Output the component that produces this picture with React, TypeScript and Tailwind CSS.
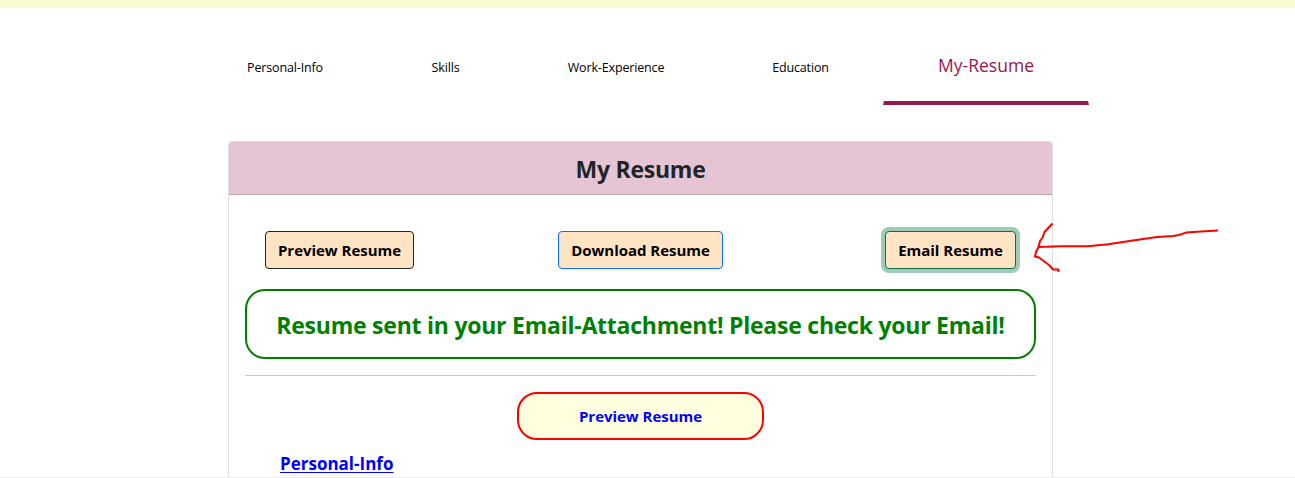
const tabs = [
  { label: 'Personal-Info', width: 'w-[184px]' },
  { label: 'Skills', width: 'w-[137px]' },
  { label: 'Work-Experience', width: 'w-[204px]' },
  { label: 'Education', width: 'w-[165px]' },
];

const actions = [
  { label: 'Preview Resume', style: 'w-[149px] border-[#212529]' },
  { label: 'Download Resume', style: 'ml-[144px] mr-[162px] w-[165px] border-[#0d6efd]' },
  { label: 'Email Resume', style: 'w-[131px] border-[#146c43] shadow-[0_0_0_4px_#9dccb7]' },
];

function Arrow() {
  return (
    <svg className="pointer-events-none absolute left-[1030px] top-[218px]" width="195" height="60" viewBox="1030 218 195 60" fill="none" stroke="#ff0000" strokeWidth="2" strokeLinejoin="round">
      <path d="M1218 230.5L1201 231.6L1186 232.6L1179 235L1173 236L1157 237L1138 239.700L1108 244.300L1088 246.300L1060 246.300L1038.500 247" />
      <path d="M1052.500 223.500L1044.500 232L1042.500 237.500L1040 241L1038.500 247L1036 252L1035 256.500L1039 257.500L1049 265L1053 269.500L1058.500 269.500V272" />
    </svg>
  );
}

export default function App() {
  return (
    <div className="relative h-[478px] w-full overflow-hidden border-b border-[#eeeeee] bg-white font-['Open_Sans','Noto_Sans',sans-serif]">
      <div className="h-2 bg-[#f9fad2]" />
      <nav className="ml-[193px] flex h-[97px] items-stretch">
        {tabs.map((tab) => (
          <a key={tab.label} className={`flex shrink-0 justify-center pt-[51px] text-[12.5px] leading-[18px] tracking-[-0.15px] text-black ${tab.width}`}>
            {tab.label}
          </a>
        ))}
        <a className="flex w-[206px] shrink-0 justify-center border-x border-b-4 border-x-transparent border-b-[#99154e] pt-[44px] text-[17.5px] font-medium leading-[27px] tracking-[0.02px] text-[#99154e]">
          My-Resume
        </a>
      </nav>

      <main className="ml-[228px] mt-[36px] h-[400px] w-[825px] rounded-[4px] border border-[#dfdfdf] bg-white">
        <h1 className="flex h-[53px] items-center justify-center rounded-t-[3px] border-b border-[#c5a9b7] bg-[#e5c5d4] pt-[2px] text-[23px] font-bold leading-[29px] tracking-[-0.25px] text-[#212529]">
          My Resume
        </h1>
        <div className="px-4">
          <div className="flex px-5 pt-[36px]">
            {actions.map((action) => (
              <button key={action.label} className={`h-[38px] shrink-0 rounded-[4px] border bg-[#ffe4c4] pb-[1px] text-[15px] font-bold leading-6 tracking-[-0.03px] text-black ${action.style}`}>
                {action.label}
              </button>
            ))}
          </div>
          <div className="mt-5 flex h-[70px] items-center justify-center whitespace-nowrap rounded-[20px] border-2 border-[#008000] pt-[3px] text-[23px] font-bold leading-[29px] tracking-[-0.24px] text-[#008000]">
            Resume sent in your Email-Attachment! Please check your Email!
          </div>
          <hr className="mt-4 border-t border-[#c8c9ca]" />
          <div className="mx-auto mt-4 flex h-12 w-[247px] items-center justify-center rounded-[20px] border-2 border-[#ff0000] bg-[#ffffe0] pb-[1px] text-[15px] font-bold leading-6 tracking-[-0.03px] text-[#0000ff]">
            Preview Resume
          </div>
          <h2 className="ml-[35px] mt-[12px] text-[17px] font-bold leading-[24px] text-[#0000ff] underline decoration-1 underline-offset-2">
            Personal-Info
          </h2>
        </div>
      </main>
      <Arrow />
    </div>
  );
}
